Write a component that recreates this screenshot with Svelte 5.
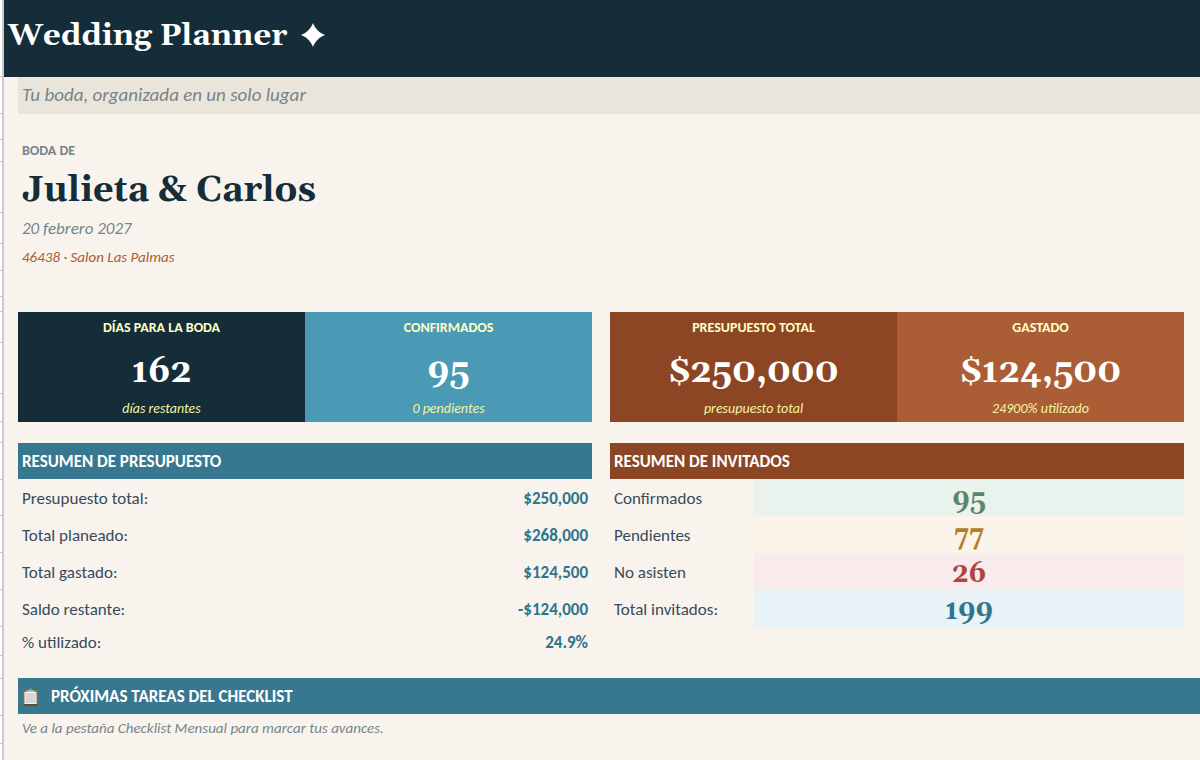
<script lang="ts">
  type Card = {
    label: string;
    value: string;
    note: string;
    tone: string;
  };

  // Spreadsheet row heights, drawn as ticks in the left gutter
  const rowHeights = [77, 37, 26, 22, 51, 31, 27, 26, 15, 31, 51, 28, 21, 37, 36, 37, 37, 37, 29, 23, 37, 28];

  const cardGroups: Card[][] = [
    [
      { label: 'DÍAS PARA LA BODA', value: '162', note: 'días restantes', tone: 'navy' },
      { label: 'CONFIRMADOS', value: '95', note: '0 pendientes', tone: 'sky' },
    ],
    [
      { label: 'PRESUPUESTO TOTAL', value: '$250,000', note: 'presupuesto total', tone: 'brown' },
      { label: 'GASTADO', value: '$124,500', note: '24900% utilizado', tone: 'copper' },
    ],
  ];

  const budget = [
    { label: 'Presupuesto total:', value: '$250,000' },
    { label: 'Total planeado:', value: '$268,000' },
    { label: 'Total gastado:', value: '$124,500' },
    { label: 'Saldo restante:', value: '-$124,000' },
    { label: '% utilizado:', value: '24.9%' },
  ];

  const guests = [
    { label: 'Confirmados', value: 95, tone: 'green' },
    { label: 'Pendientes', value: 77, tone: 'amber' },
    { label: 'No asisten', value: 26, tone: 'red' },
    { label: 'Total invitados:', value: 199, tone: 'blue' },
  ];
</script>

<div class="planner">
  <div class="gutter" aria-hidden="true">
    {#each rowHeights as height}
      <div class="tick" style="height: {height}px"></div>
    {/each}
  </div>

  <main class="sheet">
    <header class="banner">
      <h1>Wedding Planner</h1>
      <svg class="star" viewBox="0 0 24 24" aria-hidden="true">
        <path d="M12 0C14.4 6 18 9.6 24 12C18 14.4 14.4 18 12 24C9.6 18 6 14.4 0 12C6 9.6 9.6 6 12 0Z" />
      </svg>
    </header>

    <div class="content">
      <p class="tagline">Tu boda, organizada en un solo lugar</p>

      <section class="couple">
        <p class="eyebrow">BODA DE</p>
        <h2>Julieta &amp; Carlos</h2>
        <p class="date">20 febrero 2027</p>
        <p class="place">46438 · Salon Las Palmas</p>
      </section>

      <section class="columns cards">
        {#each cardGroups as group}
          <div class="card-group">
            {#each group as card}
              <div class="card {card.tone}">
                <p class="card-label">{card.label}</p>
                <p class="card-value">{card.value}</p>
                <p class="card-note">{card.note}</p>
              </div>
            {/each}
          </div>
        {/each}
      </section>

      <div class="columns summaries">
        <section>
          <h3 class="bar teal">RESUMEN DE PRESUPUESTO</h3>
          <table class="budget">
            <tbody>
              {#each budget as row}
                <tr>
                  <th scope="row">{row.label}</th>
                  <td>{row.value}</td>
                </tr>
              {/each}
            </tbody>
          </table>
        </section>

        <section>
          <h3 class="bar brown">RESUMEN DE INVITADOS</h3>
          <table class="guests">
            <tbody>
              {#each guests as row}
                <tr>
                  <th scope="row">{row.label}</th>
                  <td class={row.tone}>{row.value}</td>
                </tr>
              {/each}
            </tbody>
          </table>
        </section>
      </div>

      <section class="tasks">
        <h3 class="bar teal">
          <svg class="clipboard" viewBox="0 0 16 18" aria-hidden="true">
            <rect x="1" y="2" width="14" height="16" rx="1" fill="#9a7040" />
            <rect x="1" y="16" width="14" height="2" rx="1" fill="#684a2c" />
            <rect x="2" y="4" width="12" height="12" fill="#f1f1f2" />
            <rect x="3" y="5" width="10" height="10" fill="#d5d5d9" />
            <path d="M4 4V2H6.5C6.5 0 9.5 0 9.5 2H12V4Z" fill="#91a1a8" />
            <path d="M4.5 3.5H11.5" stroke="#c8d1d4" stroke-width="1" />
          </svg>
          PRÓXIMAS TAREAS DEL CHECKLIST
        </h3>
        <p class="hint">Ve a la pestaña Checklist Mensual para marcar tus avances.</p>
      </section>
    </div>
  </main>
</div>

<style>
  :global(body) {
    margin: 0;
    background: #f8f4ed;
  }

  .planner {
    display: flex;
    min-height: 100vh;
    overflow: hidden;
    box-sizing: border-box;
    font-family: Calibri, Carlito, Lato, sans-serif;
    font-size: 17px;
    color: #3a4a59;
  }

  h1,
  h2,
  h3,
  p {
    margin: 0;
  }

  h1,
  h2,
  .card-value,
  .guests td {
    font-family: Georgia, Gelasio, 'Liberation Serif', serif;
    font-weight: bold;
  }

  .gutter {
    flex: none;
    width: 2px;
    background: #fff;
    border-right: 2px solid #c9cccd;
  }

  .tick {
    box-sizing: border-box;
    border-bottom: 1px solid #c3c7c8;
  }

  .sheet {
    flex: 1;
    min-width: 0;
    background: #f8f4ed;
  }

  .banner {
    display: flex;
    align-items: center;
    gap: 14px;
    box-sizing: border-box;
    height: 77px;
    padding: 0 4px 8px;
    background: #152d38;
    color: #fff;
  }

  h1 {
    padding-top: 2px;
    font-size: 31px;
    line-height: 40px;
  }

  .star {
    width: 24px;
    height: 24px;
    fill: #fff;
  }

  .content {
    padding-left: 14px;
  }

  .tagline {
    padding: 0 4px 1px;
    background: #eae5da;
    color: #76848a;
    font-size: 19px;
    font-style: italic;
    line-height: 36px;
  }

  .couple {
    padding: 26px 4px 41px;
  }

  .eyebrow {
    color: #76848a;
    font-size: 14px;
    font-weight: bold;
    line-height: 22px;
  }

  h2 {
    padding-top: 6px;
    color: #152d38;
    font-size: 36px;
    line-height: 45px;
  }

  .date {
    color: #76848a;
    font-size: 17px;
    font-style: italic;
    line-height: 31px;
  }

  .place {
    color: #ad5c33;
    font-size: 15px;
    font-style: italic;
    line-height: 27px;
  }

  .columns {
    display: grid;
    grid-template-columns: 1fr 1fr;
    gap: 18px;
    padding-right: 16px;
  }

  .card-group {
    display: grid;
    grid-template-columns: 1fr 1fr;
  }

  .card {
    text-align: center;
    color: #fff;
  }

  .card-label {
    padding-top: 1px;
    color: #ffffc5;
    font-size: 14px;
    font-weight: bold;
    line-height: 30px;
  }

  .card-value {
    padding-top: 8px;
    font-size: 34px;
    font-kerning: none;
    line-height: 43px;
  }

  .card-note {
    padding-top: 1px;
    color: #f4f4a0;
    font-size: 14px;
    font-style: italic;
    line-height: 27px;
  }

  .navy {
    background: #152d38;
  }

  .sky {
    background: #4a9ab6;
  }

  .brown {
    background: #8c4623;
  }

  .copper {
    background: #ab5e35;
  }

  .teal {
    background: #37778f;
  }

  .summaries {
    padding-top: 21px;
  }

  .bar {
    display: flex;
    align-items: center;
    padding: 2px 4px 0;
    color: #fff;
    font-size: 17px;
    line-height: 34px;
  }

  table {
    width: 100%;
    border-collapse: collapse;
    table-layout: fixed;
  }

  th,
  td {
    box-sizing: border-box;
    height: 37px;
    padding: 2px 4px 0;
    line-height: 24px;
  }

  th {
    font-weight: normal;
    text-align: left;
  }

  .budget td {
    color: #2f758e;
    font-weight: bold;
    text-align: right;
  }

  .budget tr:last-child th,
  .budget tr:last-child td {
    height: 29px;
  }

  .guests th {
    width: 144px;
  }

  .guests td {
    padding-top: 4px;
    font-size: 27px;
    text-align: center;
  }

  .green {
    background: #e9f2ec;
    color: #5c8767;
  }

  .amber {
    background: #faf5e8;
    color: #b57c2c;
  }

  .red {
    background: #f9ebeb;
    color: #ad4541;
  }

  .blue {
    background: #e9f2f6;
    color: #31758e;
  }

  .tasks {
    padding-top: 22px;
  }

  .clipboard {
    width: 17px;
    height: 18px;
    margin-right: 12px;
  }

  .hint {
    padding-left: 4px;
    color: #76848a;
    font-size: 15px;
    font-style: italic;
    line-height: 29px;
  }
</style>
